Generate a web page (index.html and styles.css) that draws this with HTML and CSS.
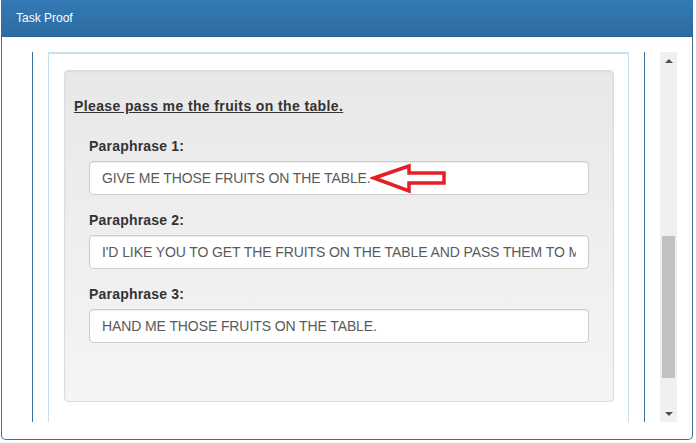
FILE: index.html
```html
<!DOCTYPE html>
<html lang="en">
<head>
    <meta charset="UTF-8">
    <title>Task Proof</title>
    <link rel="stylesheet" href="styles.css">
</head>
<body>

<div class="dialog">
    <div class="dialog-header">Task Proof</div>

    <div class="dialog-body">
        <div class="viewport">
            <div class="panel">
                <div class="well">
                    <p class="sentence">Please pass me the fruits on the table.</p>

                    <div class="answers">
                        <div class="form-group">
                            <label>Paraphrase 1:</label>
                            <div class="field">
                                <input type="text" class="form-control" value="GIVE ME THOSE FRUITS ON THE TABLE." readonly>
                                <svg class="marker" width="80" height="34" viewBox="0 0 80 34">
                                    <polygon points="4,16 39,4 39,11 74,11 74,21 39,21 39,29" fill="#fff" stroke="#e41f26" stroke-width="3.5" stroke-linejoin="miter"/>
                                </svg>
                            </div>
                        </div>
                        <div class="form-group">
                            <label>Paraphrase 2:</label>
                            <div class="field">
                                <input type="text" class="form-control" value="I'D LIKE YOU TO GET THE FRUITS ON THE TABLE AND PASS THEM TO ME." readonly>
                            </div>
                        </div>
                        <div class="form-group">
                            <label>Paraphrase 3:</label>
                            <div class="field">
                                <input type="text" class="form-control" value="HAND ME THOSE FRUITS ON THE TABLE." readonly>
                            </div>
                        </div>
                    </div>
                </div>
            </div>
        </div>

        <div class="scrollbar">
            <div class="sb-btn"><span class="tri up"></span></div>
            <div class="sb-track"><div class="sb-thumb"></div></div>
            <div class="sb-btn"><span class="tri down"></span></div>
        </div>
    </div>
</div>

</body>
</html>
```

FILE: styles.css
```css
body { margin: 0; padding: 0; background: #fff; font-family: "Liberation Sans", Arial, sans-serif; font-size: 14px; color: #333; }

.dialog {
    width: 692px;
    height: 440px;
    margin-left: 1px;
    box-sizing: border-box;
    border: 1px solid #3b6f9e;
    border-top: none;
    border-radius: 0 0 5px 5px;
    background: #fff;
}

.dialog-header {
    height: 37px;
    line-height: 36px;
    padding: 0 15px;
    margin: 0 -1px;
    color: #fff;
    font-size: 12px;
    background: linear-gradient(#337ab7, #2d6ba1);
    border-bottom: 1px solid #2a6496;
    box-sizing: border-box;
}

.dialog-body {
    display: flex;
    padding: 15px 15px 0 30px;
}

.viewport {
    width: 613px;
    height: 370px;
    box-sizing: border-box;
    border-left: 1px solid #3d6f9b;
    border-right: 1px solid #3d6f9b;
    padding: 0 15px;
    overflow: hidden;
}

.panel {
    border: 1px solid #c5e3ee;
    border-top-width: 2px;
    padding: 16px 14px 40px 15px;
}

.well {
    border: 1px solid #dcdcdc;
    border-radius: 4px;
    background: linear-gradient(#e8e8e8, #f5f5f5);
    box-shadow: inset 0 1px 3px rgba(0,0,0,0.05);
    padding: 25px 9px 43px;
}

.sentence {
    margin: 0 0 20px;
    font-weight: bold;
    text-decoration: underline;
    line-height: 20px;
    letter-spacing: 0.38px;
    color: #333;
}

.answers { padding: 0 15px; }

.form-group { margin-bottom: 15px; }
.form-group label {
    display: inline-block;
    margin-bottom: 5px;
    font-weight: bold;
    line-height: 20px;
    letter-spacing: 0.2px;
}

.field { position: relative; }

.form-control {
    display: block;
    width: 100%;
    height: 34px;
    box-sizing: border-box;
    padding: 6px 12px;
    font-family: "Liberation Sans", Arial, sans-serif;
    font-size: 14px;
    letter-spacing: -0.1px;
    color: #5a5a5a;
    background: #fff;
    border: 1px solid #ccc;
    border-radius: 4px;
    box-shadow: inset 0 1px 1px rgba(0,0,0,0.075);
    outline: none;
}

/* annotation arrow drawn over the first answer */
.marker { position: absolute; left: 281px; top: 1px; }

.scrollbar {
    width: 17px;
    height: 370px;
    margin-left: 15px;
    background: #f0f0f0;
    display: flex;
    flex-direction: column;
}
.sb-btn {
    height: 17px;
    display: flex;
    align-items: center;
    justify-content: center;
}
.sb-track { flex: 1; padding-top: 167px; }
.sb-thumb { height: 142px; margin: 0 2px; background: #c1c1c1; }

.tri { width: 0; height: 0; border-left: 4px solid transparent; border-right: 4px solid transparent; }
.tri.up { border-bottom: 4px solid #505050; }
.tri.down { border-top: 4px solid #505050; }
```
